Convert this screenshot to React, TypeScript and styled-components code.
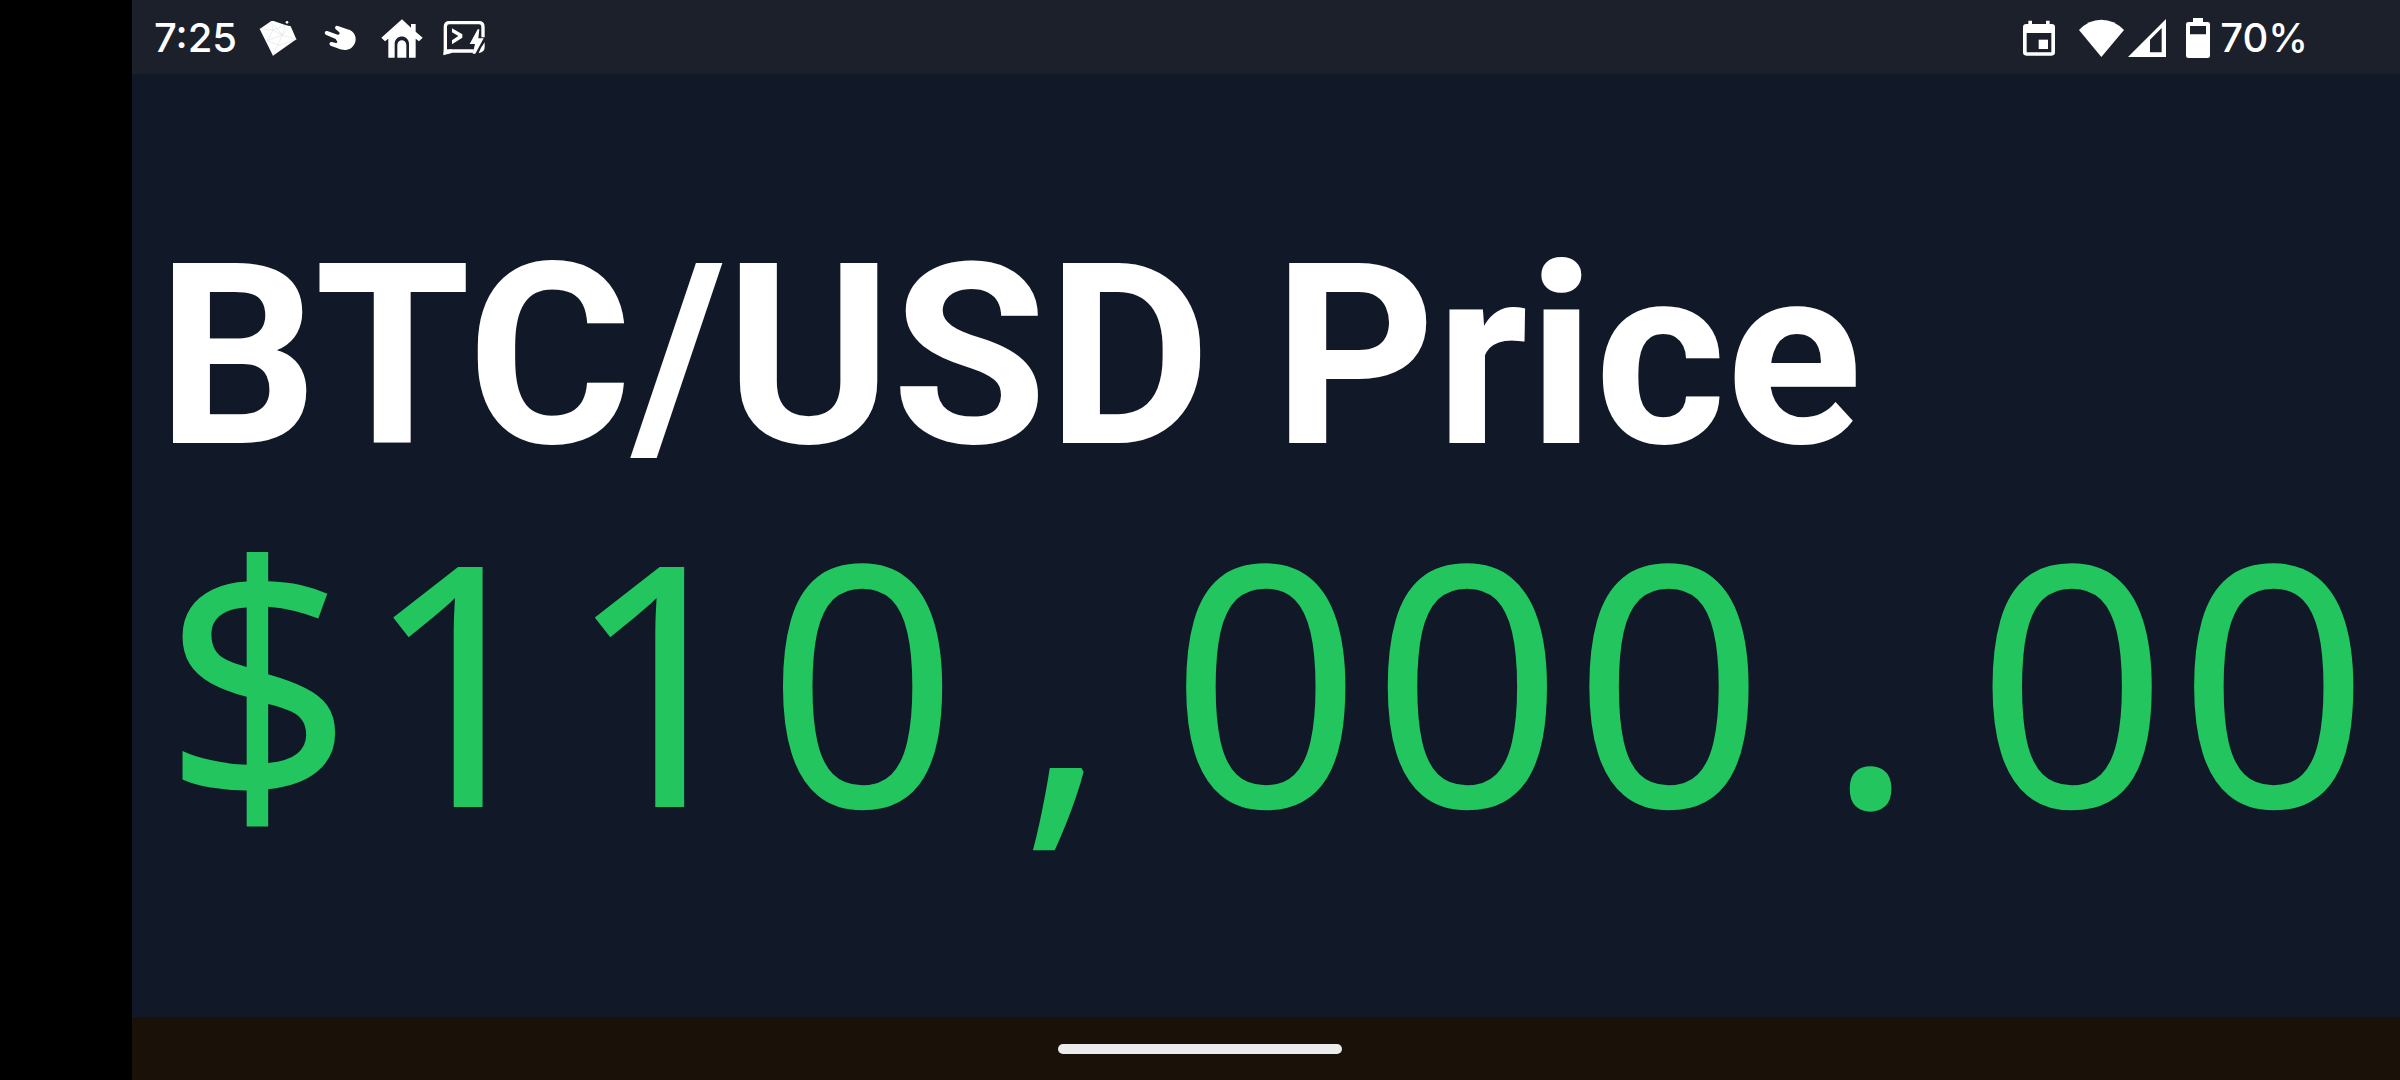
import React from "react";
import styled, { createGlobalStyle } from "styled-components";

const GlobalStyle = createGlobalStyle`
  *, *::before, *::after { box-sizing: border-box; }
  body { margin: 0; background: #000; }
`;

const Screen = styled.div`
  display: flex;
  flex-direction: column;
  min-height: 100vh;
  margin-left: 132px;
  background: #111827;
  color: #fff;
  overflow: hidden;
`;

const StatusBar = styled.header`
  display: flex;
  justify-content: space-between;
  align-items: center;
  height: 74px;
  padding: 2px 92px 0 22px;
  background: #1b202b;
`;

const StatusGroup = styled.div<{ $gap: number }>`
  display: flex;
  align-items: center;
  gap: ${(p) => p.$gap}px;
`;

const StatusText = styled.span`
  font: 500 40px/48px Inter, "Liberation Sans", sans-serif;
`;

const IconSlot = styled.span`
  display: flex;
  align-items: center;
  justify-content: center;
  width: 42px;
  height: 42px;
`;

const Glyph = styled.svg`
  display: block;
  flex: none;
`;

const Main = styled.main`
  flex: 1;
  display: flex;
  flex-direction: column;
  justify-content: center;
  gap: 42px;
  padding: 1px 25px 0;
`;

const Title = styled.h1`
  margin: 0;
  font: 700 252px/252px Roboto, "Liberation Sans", sans-serif;
  white-space: nowrap;
`;

const Price = styled.p`
  display: flex;
  margin: 0;
  padding-bottom: 32px;
  font: 400 336px/304px "Noto Sans", "Open Sans", sans-serif;
  color: #22c55e;
`;

const Digit = styled.span`
  flex: none;
  width: 0.6em;
  text-align: center;
`;

const NavBar = styled.footer`
  display: flex;
  justify-content: center;
  align-items: center;
  height: 63px;
  padding-right: 132px;
  background: #1a1209;
`;

const NavHandle = styled.button`
  width: 284px;
  height: 10px;
  padding: 0;
  border: 0;
  border-radius: 5px;
  background: #ececec;
`;

const GemIcon = () => (
  <Glyph width="38" height="36" viewBox="0 0 114 108" aria-hidden="true">
    <path fill="#fff" d="M2 27 37 3 44 3 79 15 95 19 112 58 42 107Z" />
    <circle cx="84" cy="7" r="4" fill="#fff" />
    <path
      fill="none"
      stroke="#d9dade"
      strokeWidth="1.5"
      d="M2 27 42 30 79 15 70 45 112 58M37 3 42 30 24 62 70 45 95 19M42 30 70 45 42 107M24 62 60 76 112 58M42 12 70 45"
    />
  </Glyph>
);

const HandIcon = () => (
  <Glyph width="32" height="26" viewBox="0 0 96 78" aria-hidden="true">
    <path
      fill="#fff"
      d="M34 5C36 1 40 2 44 4L70 13C85 17 95 27 95 43C95 60 81 74 66 75C58 76 49 73 41 70L20 62C14 59 16 50 23 51L36 54C40 54 41 50 38 47L35 42 7 30C-1 26 2 16 10 18L41 29C46 30 49 25 45 21L38 15C34 12 32 9 34 5Z"
    />
  </Glyph>
);

const HouseIcon = () => (
  <Glyph width="42" height="39" viewBox="0 0 126 117" aria-hidden="true">
    <path
      fill="#fff"
      d="M63 1 90 26V15H104V38L125 56 114 67 104 59V116H84V75C84 45 41 45 41 75V116H22V59L12 67 1 56Z"
    />
    <path fill="#fff" d="M49 116V78C49 59 76 59 76 78V116Z" />
  </Glyph>
);

const TerminalIcon = () => (
  <Glyph width="42" height="36" viewBox="0 0 126 108" aria-hidden="true">
    <path
      fill="none"
      stroke="#fff"
      strokeWidth="10"
      d="M120 52V20Q120 8 108 8H19Q7 8 7 20V97L25 93H92"
    />
    <path fill="#fff" d="M3 88H26V99L1 106Z" />
    <path fill="#fff" d="M27 25 58 43V53L27 73V61L46 48 27 37Z" />
    <path fill="#fff" d="M104 28 80 72H96L89 101H97L122 55H106L109 28Z" />
    <path fill="#fff" d="M125 67V80C125 91 119 97 107 99L114 83Z" />
  </Glyph>
);

const CalendarIcon = () => (
  <Glyph width="32" height="36" viewBox="0 0 96 108" aria-hidden="true">
    <path
      fill="#fff"
      fillRule="evenodd"
      d="M16 2H27V12H69V2H80V12H86Q96 12 96 22V97Q96 107 86 107H10Q0 107 0 97V22Q0 12 10 12H16ZM11 39V97H85V39Z"
    />
    <path fill="#fff" d="M47 59H75V87H47Z" />
  </Glyph>
);

const WifiIcon = () => (
  <Glyph width="45" height="38" viewBox="0 0 135 114" aria-hidden="true">
    <path fill="#fff" d="M0 33Q29 2 67 2T135 33L67 114Z" />
  </Glyph>
);

const SignalIcon = () => (
  <Glyph width="38" height="38" viewBox="0 0 114 114" aria-hidden="true">
    <path fill="#fff" fillRule="evenodd" d="M0 114 114 0V114ZM66 62V100H101V27Z" />
  </Glyph>
);

const BatteryIcon = () => (
  <Glyph width="24" height="40" viewBox="0 0 72 120" aria-hidden="true">
    <path
      fill="#fff"
      fillRule="evenodd"
      d="M21 0H51V12H65Q72 12 72 19V113Q72 120 65 120H7Q0 120 0 113V19Q0 12 7 12H21ZM12 24V49H60V24Z"
    />
  </Glyph>
);

const notifications = [GemIcon, HandIcon, HouseIcon, TerminalIcon];
const price = "$110,000.00";

export default function App() {
  return (
    <>
      <GlobalStyle />
      <Screen>
        <StatusBar>
          <StatusGroup $gap={20}>
            <StatusText>7:25</StatusText>
            {notifications.map((Icon, i) => (
              <IconSlot key={i}>
                <Icon />
              </IconSlot>
            ))}
          </StatusGroup>
          <StatusGroup $gap={24}>
            <CalendarIcon />
            <StatusGroup $gap={20}>
              <StatusGroup $gap={4}>
                <WifiIcon />
                <SignalIcon />
              </StatusGroup>
              <StatusGroup $gap={10}>
                <BatteryIcon />
                <StatusText>70%</StatusText>
              </StatusGroup>
            </StatusGroup>
          </StatusGroup>
        </StatusBar>
        <Main>
          <Title>BTC/USD Price</Title>
          <Price>
            {price.split("").map((char, i) => (
              <Digit key={i}>{char}</Digit>
            ))}
          </Price>
        </Main>
        <NavBar>
          <NavHandle type="button" aria-label="Home" />
        </NavBar>
      </Screen>
    </>
  );
}
